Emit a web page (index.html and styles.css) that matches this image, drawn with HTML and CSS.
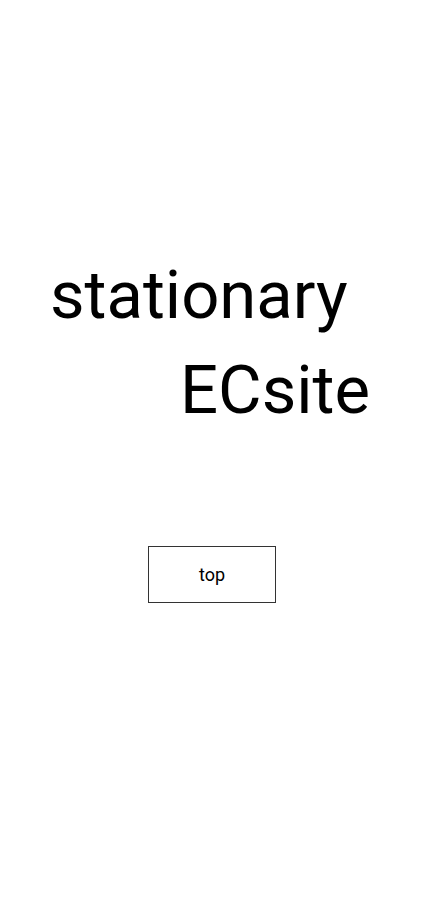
FILE: index.html
```html
<!DOCTYPE html>
<html>
<head>
<meta charset="utf-8">
<link rel="stylesheet" href="styles.css">
</head>
<body>
<main class="page">
  <h1 class="title">
    <span class="line1">stationary</span>
    <span class="line2">ECsite</span>
  </h1>
  <div class="actions">
    <a class="top-btn" href="#">top</a>
  </div>
</main>
</body>
</html>
```
FILE: styles.css
```css
html, body { margin: 0; padding: 0; background: #fff; }
body { font-family: Roboto, "Noto Sans", sans-serif; color: #000; }
.page { display: flex; flex-direction: column; align-items: center; padding-top: 248px; }
.title { margin: 0 6px 0 0; font-weight: 400; font-size: 67px; line-height: 95px; display: flex; flex-direction: column; width: 320px; }
.line1 { align-self: flex-start; }
.line2 { align-self: flex-end; }
.actions { margin-top: 108px; margin-right: 2px; }
.top-btn { display: flex; align-items: center; justify-content: center; width: 126px; height: 55px; border: 1px solid #333; color: #000; text-decoration: none; font-size: 18px; }
```
